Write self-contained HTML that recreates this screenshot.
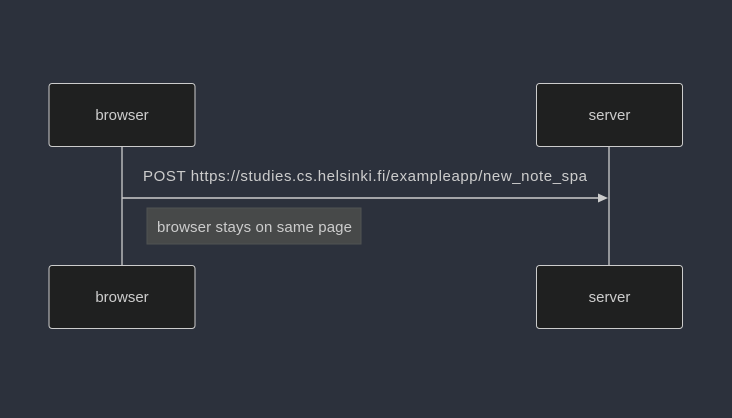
<!DOCTYPE html>
<html><head><style>
body{margin:0;background:#2c313c;width:732px;height:413px;overflow:hidden}
svg text{font-family:"Trebuchet MS","Liberation Sans",sans-serif;font-size:15px;fill:#ccc}
</style></head><body>
<svg width="732" height="413" viewBox="0 0 732 413">
<rect width="732" height="413" fill="#2c313c"/>
<line x1="122" y1="146" x2="122" y2="265" stroke="#ccc" stroke-width="1.3"/>
<line x1="609" y1="146" x2="609" y2="265" stroke="#ccc" stroke-width="1.3"/>
<rect x="49" y="83.5" width="146" height="63" rx="3" fill="#1f2020" stroke="#ccc"/>
<rect x="536.5" y="83.5" width="146" height="63" rx="3" fill="#1f2020" stroke="#ccc"/>
<rect x="49" y="265.5" width="146" height="63" rx="3" fill="#1f2020" stroke="#ccc"/>
<rect x="536.5" y="265.5" width="146" height="63" rx="3" fill="#1f2020" stroke="#ccc"/>
<text x="122" y="120" text-anchor="middle">browser</text>
<text x="609.5" y="120" text-anchor="middle">server</text>
<text x="122" y="302" text-anchor="middle">browser</text>
<text x="609.5" y="302" text-anchor="middle">server</text>
<text x="143" y="181" textLength="444" lengthAdjust="spacing">POST https://studies.cs.helsinki.fi/exampleapp/new_note_spa</text>
<line x1="122" y1="198" x2="600" y2="198" stroke="#ccc" stroke-width="1.5"/>
<path d="M598 193.5 L608 198 L598 202.5 Z" fill="#ccc"/>
<rect x="147" y="208" width="214" height="36" fill="#474949" stroke="#4f5252"/>
<text x="157" y="232" textLength="195" lengthAdjust="spacing" fill="#bbb">browser stays on same page</text>
</svg>
</body></html>
